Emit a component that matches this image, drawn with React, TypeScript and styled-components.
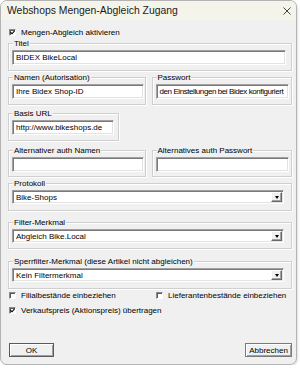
import React from 'react';
import styled, { createGlobalStyle } from 'styled-components';

const GlobalStyle = createGlobalStyle`
  html, body {
    margin: 0;
    padding: 0;
    background: #ffffff;
  }
  body {
    font-family: 'Liberation Sans', Arial, sans-serif;
    color: #000;
  }
`;

const Dialog = styled.div`
  width: 297px;
  height: 365px;
  box-sizing: border-box;
  border: 1px solid #b4b4b4;
  border-radius: 7px;
  background: #f0f0f0;
  overflow: hidden;
  display: flex;
  flex-direction: column;
  box-shadow: 1px 1px 2px rgba(0, 0, 0, 0.12);
`;

const TitleBar = styled.div`
  height: 19px;
  background: #f5f4ea;
  display: flex;
  align-items: center;
  justify-content: space-between;
  padding: 0 5px 0 6px;
  font-size: 10.4px;
  color: #1a1a1a;
`;

const CloseIcon = styled.svg`
  width: 8px;
  height: 8px;
`;

const Body = styled.div`
  flex: 1;
  display: flex;
  flex-direction: column;
  padding: 0 4px 7px 7px;
  font-size: 8px;
`;

const CheckRow = styled.div<{ $top: number }>`
  display: flex;
  align-items: center;
  height: 10px;
  margin-top: ${p => p.$top}px;
`;

const CheckItem = styled.label<{ $width?: number }>`
  display: flex;
  align-items: center;
  gap: 5px;
  width: ${p => (p.$width ? `${p.$width}px` : 'auto')};
  padding-left: 1px;
`;

const Box = styled.span`
  width: 7px;
  height: 7px;
  box-sizing: border-box;
  background: #fff;
  border: 1px solid;
  border-color: #8a8a8a #fff #fff #8a8a8a;
  box-shadow: inset 1px 1px 0 #5a5a5a;
  display: flex;
  align-items: center;
  justify-content: center;
`;

const Row = styled.div<{ $top: number }>`
  display: flex;
  gap: 6px;
  margin-top: ${p => p.$top}px;
`;

const Group = styled.div<{ $width: number; $height?: number; $top?: number }>`
  position: relative;
  box-sizing: border-box;
  width: ${p => p.$width}px;
  height: ${p => p.$height ?? 28}px;
  margin-top: ${p => p.$top ?? 0}px;
  border: 1px solid #cfcfcf;
  box-shadow: inset 1px 1px 0 #fff, 1px 1px 0 #fff;
  padding: 6px 0 0 3px;
`;

const Legend = styled.span`
  position: absolute;
  top: -5px;
  left: 4px;
  padding: 0 1px;
  background: #f0f0f0;
  line-height: 9px;
`;

const Field = styled.div<{ $width: number; $tight?: boolean }>`
  box-sizing: border-box;
  width: ${p => p.$width}px;
  height: 15px;
  background: #fff;
  border: 1px solid;
  border-color: #a0a0a0 #fff #fff #a0a0a0;
  box-shadow: inset 1px 1px 0 #7a7a7a, inset -1px -1px 0 #e3e3e3;
  padding: 0 1px 0 3px;
  display: flex;
  align-items: center;
  letter-spacing: ${p => (p.$tight ? '-0.42px' : 'normal')};
  white-space: nowrap;
  overflow: hidden;
`;

const Select = styled(Field)`
  height: 14px;
  justify-content: space-between;
  padding-right: 1px;
`;

const ArrowButton = styled.span`
  width: 11px;
  height: 10px;
  box-sizing: border-box;
  background: #f0f0f0;
  border: 1px solid;
  border-color: #fff #696969 #696969 #fff;
  box-shadow: inset -1px -1px 0 #a0a0a0;
  display: flex;
  align-items: center;
  justify-content: center;
`;

const Arrow = styled.span`
  width: 0;
  height: 0;
  border-left: 2.5px solid transparent;
  border-right: 2.5px solid transparent;
  border-top: 3px solid #000;
`;

const ButtonRow = styled.div`
  margin-top: auto;
  display: flex;
  justify-content: space-between;
  padding-left: 1px;
`;

const Button = styled.div<{ $width: number; $default?: boolean }>`
  box-sizing: border-box;
  width: ${p => p.$width}px;
  height: 14px;
  border: 1px solid ${p => (p.$default ? '#5a5a5a' : '#7a7a7a')};
  box-shadow: inset 1px 1px 0 #fff, inset -1px -1px 0 #a0a0a0;
  background: #f0f0f0;
  display: flex;
  align-items: center;
  justify-content: center;
`;

const Check = () => (
  <svg width="5" height="5" viewBox="0 0 5 5">
    <path d="M0.5 2.2 L2 3.8 L4.6 0.8" fill="none" stroke="#000" strokeWidth="1.1" />
  </svg>
);

const CheckBox = ({ checked, label, width }: { checked?: boolean; label: string; width?: number }) => (
  <CheckItem $width={width}>
    <Box>{checked && <Check />}</Box>
    <span>{label}</span>
  </CheckItem>
);

const Dropdown = ({ value }: { value: string }) => (
  <Select $width={272}>
    <span>{value}</span>
    <ArrowButton>
      <Arrow />
    </ArrowButton>
  </Select>
);

export default function App() {
  return (
    <>
      <GlobalStyle />
      <Dialog>
        <TitleBar>
          <span>Webshops Mengen-Abgleich Zugang</span>
          <CloseIcon viewBox="0 0 8 8">
            <path d="M0.5 0.5 L7.5 7.5 M7.5 0.5 L0.5 7.5" stroke="#444" strokeWidth="1" />
          </CloseIcon>
        </TitleBar>
        <Body>
          <CheckRow $top={7}>
            <CheckBox checked label="Mengen-Abgleich aktivieren" />
          </CheckRow>

          <Group $width={284} $top={6}>
            <Legend>Titel</Legend>
            <Field $width={274}>BIDEX BikeLocal</Field>
          </Group>

          <Row $top={6}>
            <Group $width={138}>
              <Legend>Namen (Autorisation)</Legend>
              <Field $width={132}>Ihre Bidex Shop-ID</Field>
            </Group>
            <Group $width={141}>
              <Legend>Passwort</Legend>
              <Field $width={133} $tight>den Einstellungen bei Bidex konfiguriert</Field>
            </Group>
          </Row>

          <Group $width={111} $top={8}>
            <Legend>Basis URL</Legend>
            <Field $width={102}>http://www.bikeshops.de</Field>
          </Group>

          <Row $top={9}>
            <Group $width={138} $height={27}>
              <Legend>Alternativer auth Namen</Legend>
              <Field $width={132}></Field>
            </Group>
            <Group $width={141} $height={27}>
              <Legend>Alternatives auth Passwort</Legend>
              <Field $width={133}></Field>
            </Group>
          </Row>

          <Group $width={284} $top={6}>
            <Legend>Protokoll</Legend>
            <Dropdown value="Bike-Shops" />
          </Group>

          <Group $width={284} $height={27} $top={11}>
            <Legend>Filter-Merkmal</Legend>
            <Dropdown value="Abgleich Bike.Local" />
          </Group>

          <Group $width={284} $top={12}>
            <Legend>Sperrfilter-Merkmal (diese Artikel nicht abgleichen)</Legend>
            <Dropdown value="Kein Filtermerkmal" />
          </Group>

          <CheckRow $top={1}>
            <CheckBox label="Filialbestände einbeziehen" width={146} />
            <CheckBox label="Lieferantenbestände einbeziehen" />
          </CheckRow>

          <CheckRow $top={5}>
            <CheckBox checked label="Verkaufspreis (Aktionspreis) übertragen" />
          </CheckRow>

          <ButtonRow>
            <Button $width={45} $default>OK</Button>
            <Button $width={47}>Abbrechen</Button>
          </ButtonRow>
        </Body>
      </Dialog>
    </>
  );
}
